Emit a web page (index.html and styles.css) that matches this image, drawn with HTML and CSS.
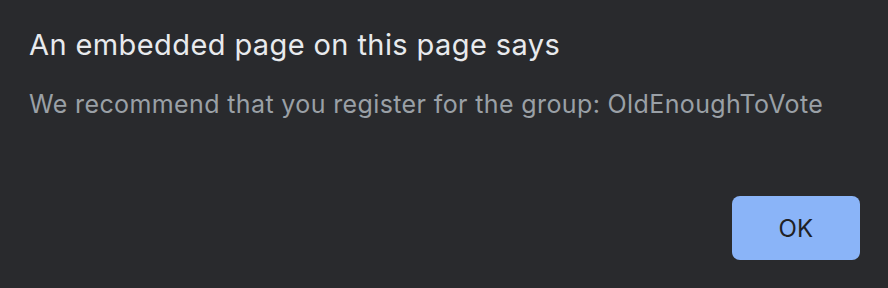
FILE: index.html
```html
<!DOCTYPE html>
<html>
<head>
<meta charset="utf-8">
<link rel="stylesheet" href="styles.css">
</head>
<body>
<div class="dialog">
  <div class="title">An embedded page on this page says</div>
  <div class="message">We recommend that you register for the group: OldEnoughToVote</div>
  <div class="actions">
    <button class="ok">OK</button>
  </div>
</div>
</body>
</html>
```
FILE: styles.css
```css
html, body {
  margin: 0;
  padding: 0;
  background: #292a2d;
}
.dialog {
  width: 888px;
  height: 288px;
  box-sizing: border-box;
  padding: 28px 28px 28px 29px;
  display: flex;
  flex-direction: column;
  font-family: Inter, "Noto Sans", sans-serif;
}
.title {
  color: #e8eaed;
  font-size: 29px;
  line-height: 34px;
  letter-spacing: 0.4px;
}
.message {
  color: #9aa0a6;
  font-size: 25px;
  line-height: 30px;
  letter-spacing: 0.38px;
  margin-top: 27px;
}
.actions {
  margin-top: auto;
  display: flex;
  justify-content: flex-end;
}
.ok {
  width: 128px;
  height: 64px;
  border: none;
  border-radius: 8px;
  background: #8ab4f8;
  color: #202124;
  font-family: Inter, "Noto Sans", sans-serif;
  font-size: 24px;
  letter-spacing: 0.3px;
  padding: 0;
}
```
